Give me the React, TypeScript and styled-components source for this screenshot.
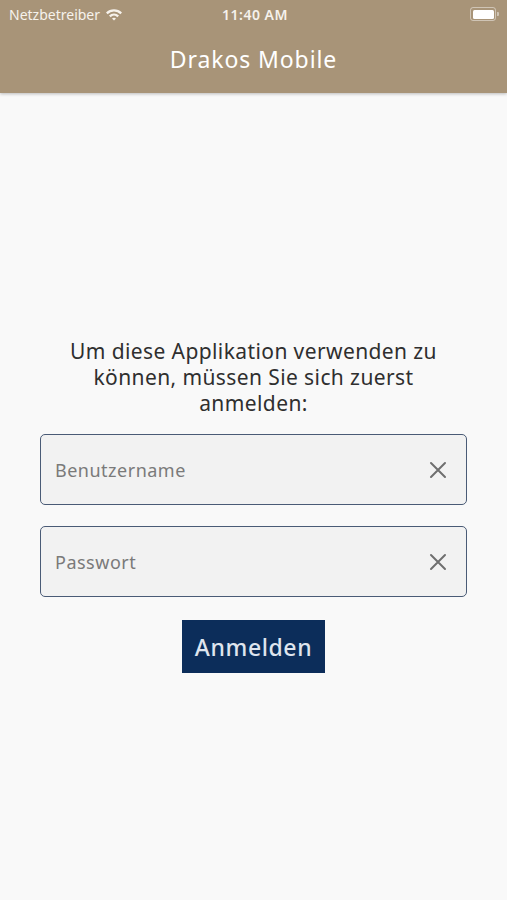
import styled, { createGlobalStyle } from "styled-components";

const GlobalStyle = createGlobalStyle`
  html, body {
    margin: 0;
    padding: 0;
    background: #f9f9f9;
    font-family: "Noto Sans", "Liberation Sans", sans-serif;
  }
`;

const Page = styled.div`
  width: 507px;
  min-height: 900px;
  display: flex;
  flex-direction: column;
  background: #f9f9f9;
`;

const Header = styled.header`
  background: #a89478;
  box-shadow: 0 1px 3px rgba(0, 0, 0, 0.25);
  color: #fff;
  height: 93px;
  display: flex;
  flex-direction: column;
`;

const StatusBar = styled.div`
  height: 28px;
  display: grid;
  grid-template-columns: 1fr auto 1fr;
  align-items: center;
  padding: 0 8px 0 9px;
  font-size: 14px;
  color: #f6f2ec;
`;

const Carrier = styled.div`
  display: flex;
  align-items: center;
  gap: 5px;
`;

const Clock = styled.div`
  font-weight: 600;
  font-size: 14px;
  letter-spacing: 0.5px;
  padding-left: 2px;
`;

const Battery = styled.div`
  justify-self: end;
  display: flex;
  align-items: center;
  gap: 1px;
`;

const BatteryBody = styled.div`
  width: 21px;
  height: 9px;
  border: 1.5px solid rgba(255, 255, 255, 0.45);
  border-radius: 3px;
  padding: 1.5px;
  box-sizing: content-box;
  display: flex;
`;

const BatteryFill = styled.div`
  flex: 1;
  background: #fff;
  border-radius: 1.5px;
`;

const BatteryCap = styled.div`
  width: 2px;
  height: 4px;
  background: rgba(255, 255, 255, 0.45);
  border-radius: 0 1px 1px 0;
`;

const Title = styled.h1`
  flex: 1;
  margin: 0;
  display: flex;
  align-items: center;
  justify-content: center;
  font-size: 23px;
  letter-spacing: 0.9px;
  font-weight: 400;
  padding-bottom: 4px;
`;

const Main = styled.main`
  display: flex;
  flex-direction: column;
  align-items: center;
  padding: 245px 40px 0;
`;

const Intro = styled.p`
  margin: 0 0 18px;
  width: 400px;
  text-align: center;
  font-size: 21px;
  letter-spacing: 0.4px;
  line-height: 26px;
  color: #2f2f2f;
`;

const Field = styled.label`
  width: 427px;
  height: 71px;
  box-sizing: border-box;
  border: 1.5px solid #4a5b76;
  border-radius: 5px;
  background: #f2f2f2;
  display: flex;
  align-items: center;
  padding: 0 18px 0 14px;
  margin-bottom: 21px;
`;

const Input = styled.input`
  flex: 1;
  border: none;
  background: transparent;
  outline: none;
  font-family: inherit;
  font-size: 18px;
  letter-spacing: 0.5px;
  color: #333;
  padding: 0;

  &::placeholder {
    color: #7a7a7a;
  }
`;

const Clear = styled.button`
  border: none;
  background: none;
  padding: 0;
  display: flex;
  color: #6f6f6f;
  cursor: pointer;
`;

const LoginButton = styled.button`
  margin-top: 2px;
  width: 143px;
  height: 53px;
  border: none;
  background: #0c2d5a;
  color: #dfe5ee;
  font-family: inherit;
  font-size: 23px;
  letter-spacing: 0.6px;
  font-weight: 500;
  padding: 0;
`;

const ClearIcon = () => (
  <svg width="20" height="20" viewBox="0 0 20 20">
    <path d="M3 3L17 17M17 3L3 17" stroke="currentColor" strokeWidth="2" strokeLinecap="round" />
  </svg>
);

const WifiIcon = () => (
  <svg width="18" height="13" viewBox="0 0 18 13">
    <path d="M1 4.6a11.5 11.5 0 0 1 16 0l-1.6 1.6a9.2 9.2 0 0 0-12.8 0z" fill="currentColor" />
    <path d="M4 7.6a7.3 7.3 0 0 1 10 0l-1.6 1.6a5 5 0 0 0-6.8 0z" fill="currentColor" />
    <path d="M7 10.6a2.9 2.9 0 0 1 4 0L9 12.6z" fill="currentColor" />
  </svg>
);

const fields = [
  { name: "user", placeholder: "Benutzername", type: "text" },
  { name: "pass", placeholder: "Passwort", type: "password" },
];

export default function App() {
  return (
    <Page>
      <GlobalStyle />
      <Header>
        <StatusBar>
          <Carrier>
            Netzbetreiber <WifiIcon />
          </Carrier>
          <Clock>11:40 AM</Clock>
          <Battery>
            <BatteryBody>
              <BatteryFill />
            </BatteryBody>
            <BatteryCap />
          </Battery>
        </StatusBar>
        <Title>Drakos Mobile</Title>
      </Header>
      <Main>
        <Intro>Um diese Applikation verwenden zu können, müssen Sie sich zuerst anmelden:</Intro>
        {fields.map((f) => (
          <Field key={f.name}>
            <Input name={f.name} type={f.type} placeholder={f.placeholder} />
            <Clear type="button" aria-label="Löschen">
              <ClearIcon />
            </Clear>
          </Field>
        ))}
        <LoginButton type="button">Anmelden</LoginButton>
      </Main>
    </Page>
  );
}
